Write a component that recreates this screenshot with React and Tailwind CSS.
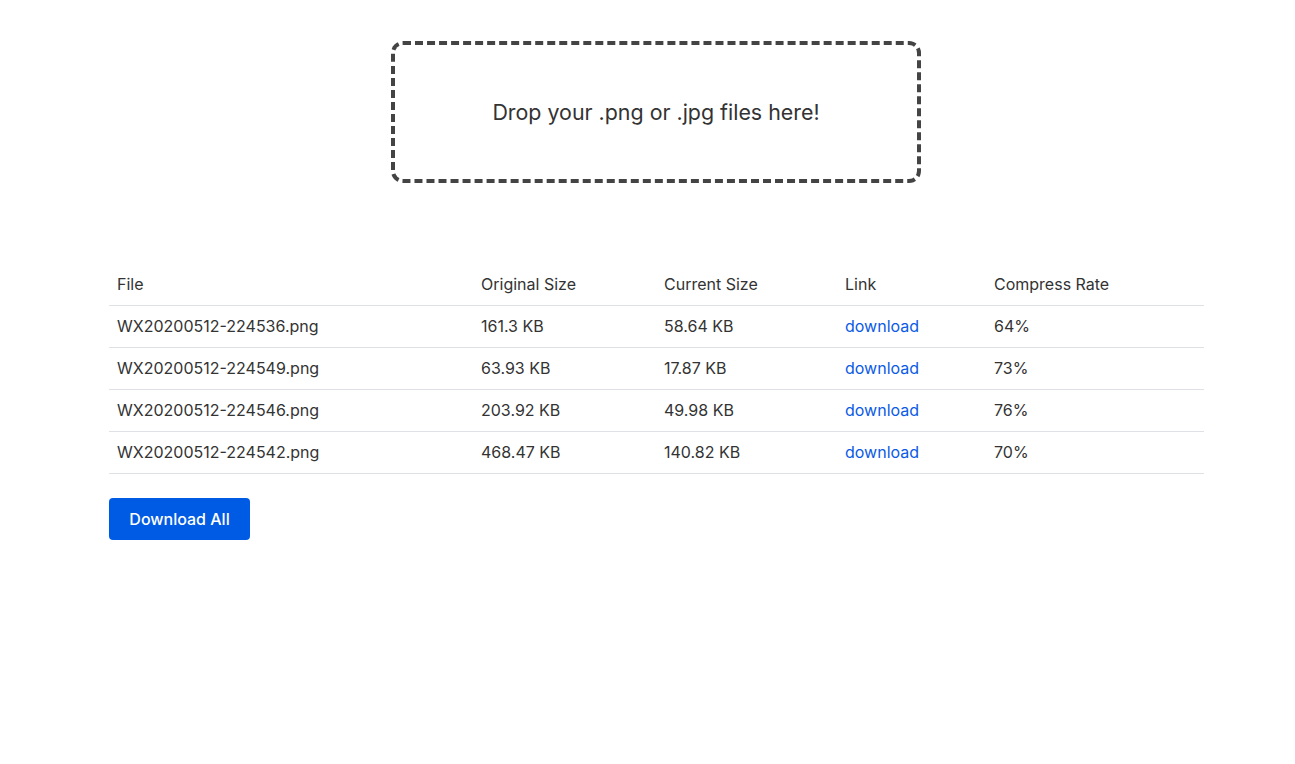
const rows = [
  { file: 'WX20200512-224536.png', orig: '161.3 KB', cur: '58.64 KB', rate: '64%' },
  { file: 'WX20200512-224549.png', orig: '63.93 KB', cur: '17.87 KB', rate: '73%' },
  { file: 'WX20200512-224546.png', orig: '203.92 KB', cur: '49.98 KB', rate: '76%' },
  { file: 'WX20200512-224542.png', orig: '468.47 KB', cur: '140.82 KB', rate: '70%' },
];

export default function App() {
  return (
    <div className="min-h-screen bg-white text-[#333] font-['Inter','Liberation_Sans',sans-serif] text-base">
      <div className="pt-[41px] flex justify-center pl-[17px]">
        <div className="w-[530px] h-[142px] border-4 border-dashed border-[#444] rounded-[12px] flex items-center justify-center">
          <span className="text-[21.4px] text-[#333]">Drop your .png or .jpg files here!</span>
        </div>
      </div>

      <div className="ml-[109px] w-[1095px] mt-[80px]">
        <table className="w-full table-fixed border-collapse">
          <colgroup>
            <col className="w-[364px]" />
            <col className="w-[183px]" />
            <col className="w-[181px]" />
            <col className="w-[149px]" />
            <col />
          </colgroup>
          <thead>
            <tr className="h-[42px] border-b border-[#dee2e6] text-left">
              <th className="font-normal px-2">File</th>
              <th className="font-normal px-2">Original Size</th>
              <th className="font-normal px-2">Current Size</th>
              <th className="font-normal px-2">Link</th>
              <th className="font-normal px-2">Compress Rate</th>
            </tr>
          </thead>
          <tbody>
            {rows.map((r) => (
              <tr key={r.file} className="h-[42px] border-b border-[#dee2e6]">
                <td className="px-2">{r.file}</td>
                <td className="px-2">{r.orig}</td>
                <td className="px-2">{r.cur}</td>
                <td className="px-2">
                  <a href="#" className="text-[#0a5ae6]">download</a>
                </td>
                <td className="px-2">{r.rate}</td>
              </tr>
            ))}
          </tbody>
        </table>
        <button className="mt-[24px] w-[141px] h-[42px] rounded-[4px] bg-[#005be4] text-white font-medium">
          Download All
        </button>
      </div>
    </div>
  );
}
